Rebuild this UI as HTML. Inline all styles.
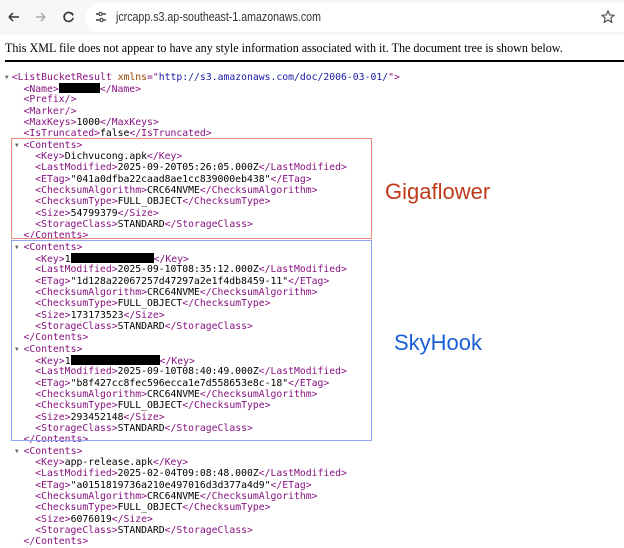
<!DOCTYPE html>
<html><head><meta charset="utf-8"><style>
html,body{margin:0;padding:0;width:624px;height:547px;overflow:hidden;background:#fff;}
.bar{position:absolute;left:0;top:0;width:624px;height:35px;background:#f6f7f8;}
.pill{position:absolute;left:85px;top:3px;width:539px;height:29px;background:#fff;border-radius:15px 0 0 15px;}
.url{position:absolute;left:116px;top:10px;font:12.5px "Liberation Sans",sans-serif;color:#333;transform:scaleX(0.85);transform-origin:0 0;white-space:nowrap;}
.msg{position:absolute;left:5px;top:41px;font:12.1px "Liberation Serif",serif;color:#000;white-space:nowrap;}
.hr{position:absolute;left:5px;top:60px;width:619px;height:2px;background:#000;}
.x{position:absolute;left:0;top:71.8px;font-family:"DejaVu Sans Mono",monospace;font-size:9.78px;line-height:11.34px;color:#000;}
.x div{height:11.34px;position:relative;white-space:pre;}
.t{color:#881280}.a{color:#994500}.v{color:#1a1aa6}
.tri{position:absolute;font-size:6px;color:#666;top:0;}
.r{display:inline-block;background:#000;height:10px;vertical-align:-1px;}
.box{position:absolute;box-sizing:border-box;}
.lbl{position:absolute;font:22px "Liberation Sans",sans-serif;}
</style></head><body>
<div class="bar"><div class="pill"></div>
<svg style="position:absolute;left:0;top:0" width="120" height="35">
<path d="M9 17h10M9 17l4-4M9 17l4 4" stroke="#333" stroke-width="1.5" fill="none"/>
<path d="M36 17h9M45 17l-4-4M45 17l-4 4" stroke="#aaa" stroke-width="1.5" fill="none"/>
<path d="M72 14a4.5 4.5 0 1 0 1 4" stroke="#333" stroke-width="1.6" fill="none"/><path d="M70 12l3.5 1.2 -0.5 3.3z" fill="#333"/>
<path d="M96 14h3M102 14h4M96 20h4M103 20h3" stroke="#444" stroke-width="1.4"/><circle cx="100.5" cy="14" r="1.6" fill="none" stroke="#444" stroke-width="1.2"/><circle cx="101.5" cy="20" r="1.6" fill="none" stroke="#444" stroke-width="1.2"/>
</svg>
<div class="url">jcrcapp.s3.ap-southeast-1.amazonaws.com</div>
<svg style="position:absolute;left:601px;top:10px" width="14" height="14"><path d="M7 1l1.8 3.9 4.2.4-3.2 2.8 1 4.1L7 10 3.2 12.2l1-4.1L1 5.3l4.2-.4z" fill="none" stroke="#444" stroke-width="1.1"/></svg>
</div>
<div class="msg">This XML file does not appear to have any style information associated with it. The document tree is shown below.</div>
<div class="hr"></div>
<div class="x"><div><span class="tri" style="left:5px">▼</span>  <span class="t">&lt;ListBucketResult</span> <span class="a">xmlns</span><span class="t">="</span><span class="v">http://s3.amazonaws.com/doc/2006-03-01/</span><span class="t">"&gt;</span></div><div>    <span class="t">&lt;Name&gt;</span><span class="r" style="width:41px"></span><span class="t">&lt;/Name&gt;</span></div><div>    <span class="t">&lt;Prefix/&gt;</span></div><div>    <span class="t">&lt;Marker/&gt;</span></div><div>    <span class="t">&lt;MaxKeys&gt;</span>1000<span class="t">&lt;/MaxKeys&gt;</span></div><div>    <span class="t">&lt;IsTruncated&gt;</span>false<span class="t">&lt;/IsTruncated&gt;</span></div><div><span class="tri" style="left:15px">▼</span>    <span class="t">&lt;Contents&gt;</span></div><div>      <span class="t">&lt;Key&gt;</span>Dichvucong.apk<span class="t">&lt;/Key&gt;</span></div><div>      <span class="t">&lt;LastModified&gt;</span>2025-09-20T05:26:05.000Z<span class="t">&lt;/LastModified&gt;</span></div><div>      <span class="t">&lt;ETag&gt;</span>"041a0dfba22caad8ae1cc839000eb438"<span class="t">&lt;/ETag&gt;</span></div><div>      <span class="t">&lt;ChecksumAlgorithm&gt;</span>CRC64NVME<span class="t">&lt;/ChecksumAlgorithm&gt;</span></div><div>      <span class="t">&lt;ChecksumType&gt;</span>FULL_OBJECT<span class="t">&lt;/ChecksumType&gt;</span></div><div>      <span class="t">&lt;Size&gt;</span>54799379<span class="t">&lt;/Size&gt;</span></div><div>      <span class="t">&lt;StorageClass&gt;</span>STANDARD<span class="t">&lt;/StorageClass&gt;</span></div><div>    <span class="t">&lt;/Contents&gt;</span></div><div><span class="tri" style="left:15px">▼</span>    <span class="t">&lt;Contents&gt;</span></div><div>      <span class="t">&lt;Key&gt;</span>1<span class="r" style="width:83px"></span><span class="t">&lt;/Key&gt;</span></div><div>      <span class="t">&lt;LastModified&gt;</span>2025-09-10T08:35:12.000Z<span class="t">&lt;/LastModified&gt;</span></div><div>      <span class="t">&lt;ETag&gt;</span>"1d128a22067257d47297a2e1f4db8459-11"<span class="t">&lt;/ETag&gt;</span></div><div>      <span class="t">&lt;ChecksumAlgorithm&gt;</span>CRC64NVME<span class="t">&lt;/ChecksumAlgorithm&gt;</span></div><div>      <span class="t">&lt;ChecksumType&gt;</span>FULL_OBJECT<span class="t">&lt;/ChecksumType&gt;</span></div><div>      <span class="t">&lt;Size&gt;</span>173173523<span class="t">&lt;/Size&gt;</span></div><div>      <span class="t">&lt;StorageClass&gt;</span>STANDARD<span class="t">&lt;/StorageClass&gt;</span></div><div>    <span class="t">&lt;/Contents&gt;</span></div><div><span class="tri" style="left:15px">▼</span>    <span class="t">&lt;Contents&gt;</span></div><div>      <span class="t">&lt;Key&gt;</span>1<span class="r" style="width:89px"></span><span class="t">&lt;/Key&gt;</span></div><div>      <span class="t">&lt;LastModified&gt;</span>2025-09-10T08:40:49.000Z<span class="t">&lt;/LastModified&gt;</span></div><div>      <span class="t">&lt;ETag&gt;</span>"b8f427cc8fec596ecca1e7d558653e8c-18"<span class="t">&lt;/ETag&gt;</span></div><div>      <span class="t">&lt;ChecksumAlgorithm&gt;</span>CRC64NVME<span class="t">&lt;/ChecksumAlgorithm&gt;</span></div><div>      <span class="t">&lt;ChecksumType&gt;</span>FULL_OBJECT<span class="t">&lt;/ChecksumType&gt;</span></div><div>      <span class="t">&lt;Size&gt;</span>293452148<span class="t">&lt;/Size&gt;</span></div><div>      <span class="t">&lt;StorageClass&gt;</span>STANDARD<span class="t">&lt;/StorageClass&gt;</span></div><div>    <span class="t">&lt;/Contents&gt;</span></div><div><span class="tri" style="left:15px">▼</span>    <span class="t">&lt;Contents&gt;</span></div><div>      <span class="t">&lt;Key&gt;</span>app-release.apk<span class="t">&lt;/Key&gt;</span></div><div>      <span class="t">&lt;LastModified&gt;</span>2025-02-04T09:08:48.000Z<span class="t">&lt;/LastModified&gt;</span></div><div>      <span class="t">&lt;ETag&gt;</span>"a0151819736a210e497016d3d377a4d9"<span class="t">&lt;/ETag&gt;</span></div><div>      <span class="t">&lt;ChecksumAlgorithm&gt;</span>CRC64NVME<span class="t">&lt;/ChecksumAlgorithm&gt;</span></div><div>      <span class="t">&lt;ChecksumType&gt;</span>FULL_OBJECT<span class="t">&lt;/ChecksumType&gt;</span></div><div>      <span class="t">&lt;Size&gt;</span>6076019<span class="t">&lt;/Size&gt;</span></div><div>      <span class="t">&lt;StorageClass&gt;</span>STANDARD<span class="t">&lt;/StorageClass&gt;</span></div><div>    <span class="t">&lt;/Contents&gt;</span></div></div>
<div class="box" style="left:11px;top:138px;width:361px;height:101px;border:1.5px solid #f08a78"></div>
<div class="box" style="left:11px;top:240px;width:361px;height:201px;border:1.5px solid #8ea4f5"></div>
<div class="lbl" style="left:385px;top:179px;color:#c0391b">Gigaflower</div>
<div class="lbl" style="left:394px;top:330px;color:#1a5fd6">SkyHook</div>
</body></html>
